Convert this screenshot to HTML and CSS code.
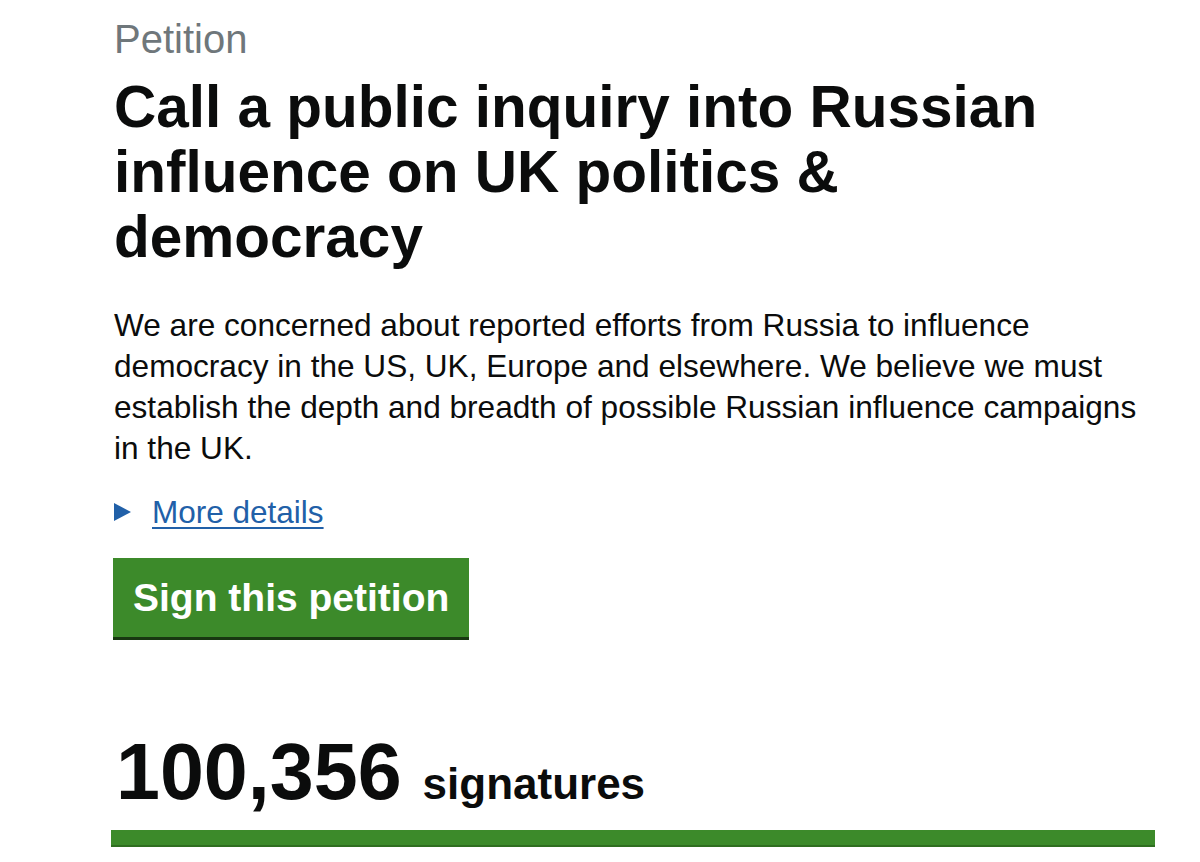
FILE: index.html
```html
<!DOCTYPE html>
<html lang="en">
<head>
<meta charset="utf-8">
<title>Petition</title>
<link rel="stylesheet" href="styles.css">
</head>
<body>
<main class="page">
  <div class="caption">Petition</div>
  <h1 class="title">Call a public inquiry into Russian influence on UK politics &amp; democracy</h1>
  <p class="summary">We are concerned about reported efforts from Russia to influence democracy in the US, UK, Europe and elsewhere. We believe we must establish the depth and breadth of possible Russian influence campaigns in the UK.</p>
  <div class="details">
    <svg class="arrow" width="17" height="18" viewBox="0 0 17 18"><polygon points="0,0 17,9 0,18" fill="#2160a8"/></svg>
    <a class="details-link" href="#">More details</a>
  </div>
  <div class="button-row"><a class="sign-button" href="#">Sign this petition</a></div>
  <div class="count"><span class="count-number">100,356</span><span class="count-label">signatures</span></div>
  <div class="progress"><div class="progress-fill" style="width:100%"></div></div>
</main>
</body>
</html>
```
FILE: styles.css
```css
html, body {
  margin: 0;
  padding: 0;
  background: #ffffff;
}
body {
  font-family: "Liberation Sans", Arial, sans-serif;
  color: #0b0c0c;
}
.page {
  padding: 16px 0 0 114px;
  display: flex;
  flex-direction: column;
  align-items: flex-start;
}
.caption {
  font-size: 40px;
  line-height: 46px;
  color: #6f777b;
}
.title {
  margin: 12px 0 0 0;
  font-size: 58.5px;
  line-height: 65px;
  font-weight: 700;
  max-width: 960px;
}
.summary {
  margin: 36px 0 0 0;
  font-size: 31.6px;
  line-height: 41px;
  max-width: 1040px;
}
.details {
  display: flex;
  align-items: center;
  gap: 21px;
  margin-top: 23px;
}
.arrow {
  display: block;
}
.details-link {
  font-size: 31.5px;
  line-height: 40px;
  color: #2160a8;
  text-decoration: underline;
  text-underline-offset: 4px;
  text-decoration-thickness: 2px;
}
.button-row {
  display: flex;
  margin-top: 26px;
  margin-left: -1px;
}
.sign-button {
  display: block;
  background: #3c8a2a;
  color: #ffffff;
  font-weight: 700;
  font-size: 39px;
  line-height: 79px;
  padding: 0 20px;
  text-decoration: none;
  box-shadow: 0 3px 0 #183811;
}
.count {
  display: flex;
  align-items: baseline;
  gap: 21px;
  margin-top: 95px;
  margin-left: 2px;
}
.count-number {
  font-size: 79px;
  font-weight: 700;
  line-height: 80px;
}
.count-label {
  font-size: 44px;
  font-weight: 700;
}
.progress {
  margin-top: 18px;
  height: 17px;
  width: 1044px;
  margin-left: -3px;
}
.progress-fill {
  height: 100%;
  background: #3c8a2a;
  border-bottom: 2px solid #2f6e20;
  box-sizing: border-box;
}
```
